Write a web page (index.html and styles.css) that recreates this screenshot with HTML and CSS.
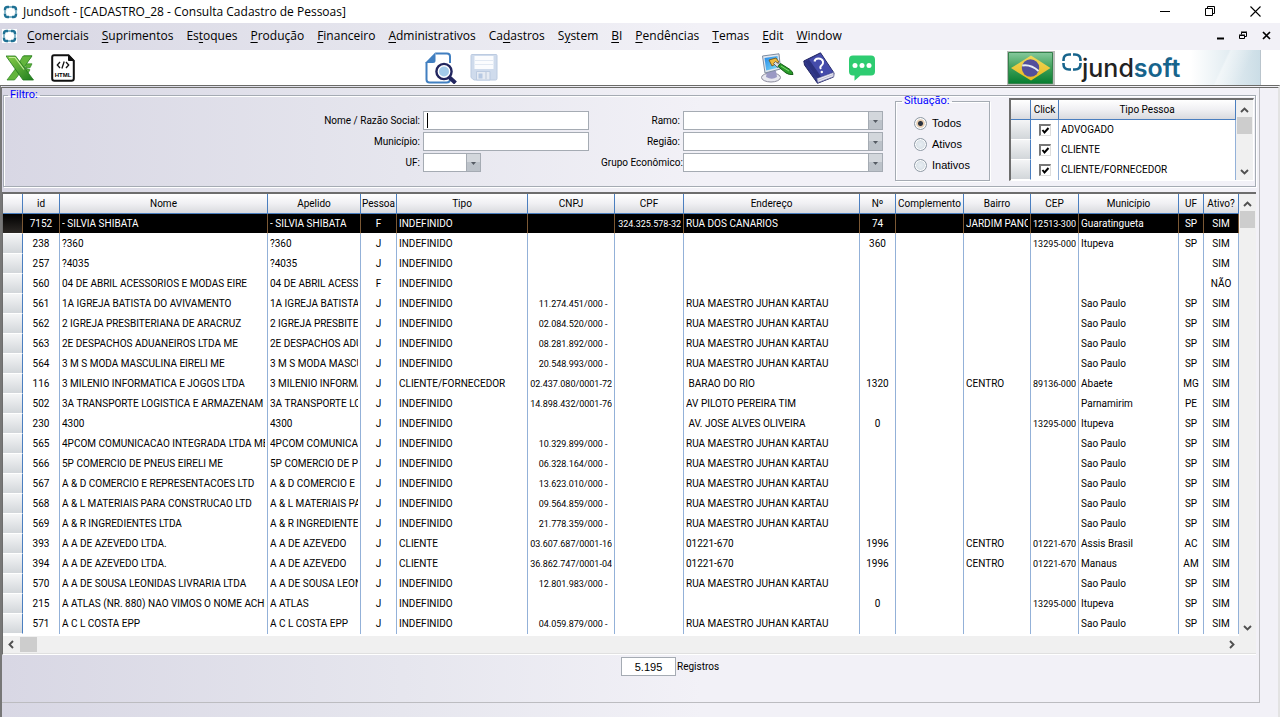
FILE: index.html
```html
<!DOCTYPE html>
<html lang="pt-BR">
<head>
<meta charset="utf-8">
<title>Jundsoft - [CADASTRO_28 - Consulta Cadastro de Pessoas]</title>
<link rel="stylesheet" href="styles.css">
</head>
<body>
<svg width="0" height="0" class="defs" aria-hidden="true">
  <defs>
    <symbol id="mark" viewBox="0 0 15 14">
      <path d="M6 2H4.500Q2 2 2 4.500V5.500M9 2h1.500Q13 2 13 4.500V5.500M6 12H4.500Q2 12 2 9.500V8.500M9 12h1.500Q13 12 13 9.500V8.500" fill="none" stroke="#1f7194" stroke-width="2.400"/>
      <path d="M2 5.500v3M13 5.500v3M6 2h3M6 12h3" stroke="#7fb3c8" stroke-width="1.800"/>
    </symbol>
    <symbol id="up" viewBox="0 0 9 6"><path d="M1 5 4.500 1.500 8 5" fill="none" stroke="#505050" stroke-width="1.900"/></symbol>
    <symbol id="down" viewBox="0 0 9 6"><path d="M1 1 4.500 4.500 8 1" fill="none" stroke="#505050" stroke-width="1.900"/></symbol>
    <symbol id="left" viewBox="0 0 6 9"><path d="M5 1 1.500 4.500 5 8" fill="none" stroke="#505050" stroke-width="1.900"/></symbol>
    <symbol id="right" viewBox="0 0 6 9"><path d="M1 1 4.500 4.500 1 8" fill="none" stroke="#505050" stroke-width="1.900"/></symbol>
  </defs>
</svg>

<header class="titlebar">
  <svg class="mark" width="15" height="14"><use href="#mark"/></svg>
  <h1>Jundsoft - [CADASTRO_28 - Consulta Cadastro de Pessoas]</h1>
  <div class="win-buttons">
    <button aria-label="Minimizar"><svg width="11" height="11"><path d="M0 5.500h10" stroke="#000"/></svg></button>
    <button aria-label="Restaurar"><svg width="11" height="11"><path d="M.5 2.500h7v7h-7zM2.500 2.500v-2h7v7h-2" fill="none" stroke="#000"/></svg></button>
    <button aria-label="Fechar"><svg width="11" height="11"><path d="M.5.5l10 10M10.500.5l-10 10" stroke="#000" stroke-width="1.100"/></svg></button>
  </div>
</header>

<nav class="menubar">
  <svg class="mark" width="15" height="14"><use href="#mark"/></svg>
  <div class="menus">
    <button><u>C</u>omerciais</button>
    <button><u>S</u>uprimentos</button>
    <button>Es<u>t</u>oques</button>
    <button><u>P</u>rodução</button>
    <button><u>F</u>inanceiro</button>
    <button><u>A</u>dministrativos</button>
    <button>Ca<u>d</u>astros</button>
    <button>S<u>y</u>stem</button>
    <button><u>B</u>I</button>
    <button><u>P</u>endências</button>
    <button><u>T</u>emas</button>
    <button><u>E</u>dit</button>
    <button><u>W</u>indow</button>
  </div>
  <div class="mdi-buttons">
    <button aria-label="Minimizar janela"><svg width="9" height="9"><path d="M1 7.500h7" stroke="#000" stroke-width="2"/></svg></button>
    <button aria-label="Restaurar janela"><svg width="9" height="9"><path d="M.5 4.500h5v3h-5zM2.500 3.500v-2h5v4h-2" fill="none" stroke="#000"/><path d="M0 4h6M2 1h6" stroke="#000"/></svg></button>
    <button aria-label="Fechar janela"><svg width="9" height="9"><path d="M1 1l7 7M8 1L1 8" stroke="#000" stroke-width="1.700"/></svg></button>
  </div>
</nav>

<div class="toolbar">
  <div class="tools tools-export">
    <button aria-label="Exportar para Excel">
      <svg width="28" height="26" viewBox="0 0 28 26">
        <defs><linearGradient id="xl" x1="0" y1="0" x2="1" y2="1"><stop offset="0" stop-color="#8bd04a"/><stop offset="1" stop-color="#1e7d1e"/></linearGradient></defs>
        <path d="M18 .8h8l-6 8h6l-2 4h-6l6 2-3 5z" fill="#5cb338" stroke="#2e8423" stroke-width=".7"/>
        <path d="M17 1h9L11 22l-2.500 3H1l9-12z" fill="#63b53d" stroke="#2e8423" stroke-width=".7"/>
        <path d="M0 1h9.500L27.500 25H17z" fill="url(#xl)" stroke="#1f761d" stroke-width=".8"/>
        <path d="M3 2.500h6l9 12" fill="none" stroke="#c5ec98" stroke-width="1.200"/>
      </svg>
    </button>
    <button aria-label="Exportar para HTML">
      <svg width="24" height="28" viewBox="0 0 24 28">
        <path d="M3 1.200h14.500L22.800 7v17.500q0 2.300-2.300 2.300H3.500q-2.300 0-2.300-2.300V3.200q0-2 1.800-2z" fill="#fff" stroke="#111" stroke-width="2"/>
        <path d="M17.500 1v5.500H23z" fill="#111" stroke="#111"/>
        <path d="M9 8 6.300 11 9 14M15 8l2.700 3L15 14M13.200 7.500l-2.300 7" fill="none" stroke="#111" stroke-width="1.300"/>
        <text x="12" y="23" text-anchor="middle" class="html-label">HTML</text>
      </svg>
    </button>
  </div>
  <div class="tools tools-record">
    <button aria-label="Consultar">
      <svg width="32" height="32" viewBox="0 0 32 32">
        <path d="M10.500 1.500H22Q25 1.500 25 4.500V11M1.500 10.500V27.500Q1.500 30.500 4.500 30.500H21.500Q25 30.500 25 27" fill="none" stroke="#417fc0" stroke-width="2"/>
        <path d="M0 11 10.500.3V8.500Q10.500 11 8 11z" fill="#417fc0"/>
        <path d="M23.500 24.500 30.500 31" stroke="#22265f" stroke-width="4"/>
        <circle cx="19" cy="19.500" r="7.600" fill="#fff" stroke="#22265f" stroke-width="2.400"/>
        <circle cx="19" cy="19.500" r="5" fill="#a3cbea"/>
      </svg>
    </button>
    <button aria-label="Salvar" disabled>
      <svg width="28" height="28" viewBox="0 0 28 28">
        <path d="M1 1.500Q1 .5 2 .5H26Q27 .5 27 1.500V24.500Q27 26 25.500 26H4L1 23.500z" fill="#cfdbec" stroke="#bccbe1"/>
        <path d="M4.500 2h19v13h-19z" fill="#fbfcfe"/>
        <path d="M5 6.500h18M5 10.500h18" stroke="#e2e9f3"/>
        <path d="M6.500 17.500H20V26H6.500z" fill="#e6ebf3" stroke="#bccbe1"/>
        <path d="M8.500 19.500h4v5h-4z" fill="#b7c9e3"/>
        <path d="M16 18v8" stroke="#d0d9e6" stroke-width="2"/>
      </svg>
    </button>
  </div>
  <div class="tools tools-help">
    <button aria-label="Temas">
      <svg width="33" height="30" viewBox="0 0 33 30">
        <defs><linearGradient id="scr" x1="0" y1="0" x2="1" y2="1"><stop offset="0" stop-color="#2487e6"/><stop offset="1" stop-color="#7fe0fa"/></linearGradient></defs>
        <ellipse cx="10" cy="24.500" rx="9.500" ry="4.500" fill="#e8e8f0" stroke="#8b8b9c"/>
        <path d="M6 18h9l1 6q-5 3.500-11 0z" fill="#9a99c4"/>
        <path d="M1.500 3 18 .8 19.500 16 4 20z" fill="#dfe6ef" stroke="#7d8ba0"/>
        <path d="M3.500 5 16.500 3 17.500 14.500 5.200 17.500z" fill="url(#scr)"/>
        <path d="M8 7l7-2 3 4-7 4z" fill="#efbb3d" stroke="#6b4a12" stroke-width=".8"/>
        <path d="M14.500 8.500l4 3-2 3-4-4z" fill="#ddd" stroke="#444" stroke-width=".7"/>
        <path d="M17 13.500 19.500 10.500 29 16.500Q32 19 32 21.500 28 22 25 20z" fill="#2a9c2a" stroke="#145c17"/>
        <path d="M20 13l8 5" stroke="#80d872"/>
      </svg>
    </button>
    <button aria-label="Ajuda">
      <svg width="32" height="32" viewBox="0 0 32 32">
        <path d="M.8 9 17.500.8 31 21 30.500 25 14.500 31.300 1.500 13z" fill="#2f3687" stroke="#222663"/>
        <path d="M14 26.500 30.500 20.500 30.800 24.500 15 30.500z" fill="#ececf5" stroke="#8587b5" stroke-width=".7"/>
        <path d="M14.500 28.500 30.500 22.500" stroke="#a7a8c0" stroke-width=".7"/>
        <path d="M2 9.500 17.500 1.500 30 20 14 26z" fill="#454cab"/>
        <path d="M2 9.500 6 7.500 18 24.500 14 26z" fill="#2c327f"/>
        <path d="M11.500 9.500Q12 6.500 15.500 6.500T20 9.500Q20.500 12 18.500 13.500T18 17" fill="none" stroke="#fff" stroke-width="2"/>
        <circle cx="18.800" cy="20" r="1.200" fill="#fff"/>
      </svg>
    </button>
    <button aria-label="Mensagens">
      <svg width="26" height="26" viewBox="0 0 26 26">
        <path d="M4 .5H22Q26 .5 26 4.500V16.500Q26 20.500 22 20.500H11.500L5.500 25.700V20.500H4Q0 20.500 0 16.500V4.500Q0 .5 4 .5z" fill="#2ecc71"/>
        <circle cx="6" cy="10.500" r="2.500" fill="#fff"/><circle cx="13" cy="10.500" r="2.500" fill="#fff"/><circle cx="20" cy="10.500" r="2.500" fill="#fff"/>
      </svg>
    </button>
  </div>
  <div class="brand">
    <svg width="48" height="34" viewBox="0 0 48 34" role="img" aria-label="Brasil">
      <defs>
        <linearGradient id="grn" x1="0" y1="0" x2="0" y2="1"><stop offset="0" stop-color="#86c99c"/><stop offset=".5" stop-color="#3d9f58"/><stop offset="1" stop-color="#067c2f"/></linearGradient>
        <linearGradient id="yel" x1="0" y1="0" x2="0" y2="1"><stop offset="0" stop-color="#eed75c"/><stop offset="1" stop-color="#e8b91d"/></linearGradient>
      </defs>
      <path d="M0 0h48v34H0z" fill="#b9bdb9"/>
      <path d="M1.500 1.500h44v31h-44z" fill="url(#grn)" stroke="#35814b"/>
      <path d="M4 17 24 4.500 43.500 17 24 29.500z" fill="url(#yel)"/>
      <circle cx="23.500" cy="17" r="8.700" fill="#53509b"/>
      <path d="M15.200 14.500Q24 13 31.500 20" fill="none" stroke="#e8eef4" stroke-width="1.800"/>
    </svg>
    <div class="logo">
      <svg width="20" height="18" viewBox="0 0 20 18" aria-hidden="true">
        <path d="M9 1.500H7Q1.500 1.500 1.500 7V8M11 1.500h2Q18.500 1.500 18.500 7V8M9 16.500H7Q1.500 16.500 1.500 11V10M11 16.500h2Q18.500 16.500 18.500 11V10" fill="none" stroke="#17648c" stroke-width="2.600"/>
      </svg>
      <span class="wordmark">jund<b>soft</b></span>
    </div>
  </div>
</div>

<main class="workspace">
  <div class="panel">
    <fieldset class="group filter">
      <legend>Filtro:</legend>
      <div class="fields fields-name">
        <label for="nome">Nome / Razão Social:</label><input id="nome" type="text" class="box caret" autofocus>
        <label for="mun">Município:</label><input id="mun" type="text" class="box">
        <label for="uf">UF:</label><select id="uf" class="box short"><option></option></select>
      </div>
      <div class="fields fields-class">
        <label for="ramo">Ramo:</label><select id="ramo" class="box"><option></option></select>
        <label for="reg">Região:</label><select id="reg" class="box"><option></option></select>
        <label for="grp">Grupo Econômico:</label><select id="grp" class="box"><option></option></select>
      </div>
      <fieldset class="group status">
        <legend>Situação:</legend>
        <label><input type="radio" name="sit" checked>Todos</label>
        <label><input type="radio" name="sit">Ativos</label>
        <label><input type="radio" name="sit">Inativos</label>
      </fieldset>
      <div class="grid-frame types">
        <table class="grid">
          <colgroup><col class="w-ind"><col class="w-click"><col></colgroup>
          <thead><tr><th></th><th>Click</th><th>Tipo Pessoa</th></tr></thead>
          <tbody>
            <tr><td></td><td class="c"><input type="checkbox" aria-label="ADVOGADO" checked></td><td>ADVOGADO</td></tr>
            <tr><td></td><td class="c"><input type="checkbox" aria-label="CLIENTE" checked></td><td>CLIENTE</td></tr>
            <tr><td></td><td class="c"><input type="checkbox" aria-label="CLIENTE/FORNECEDOR" checked></td><td>CLIENTE/FORNECEDOR</td></tr>
          </tbody>
        </table>
        <div class="vbar"><svg width="9" height="6"><use href="#up"/></svg><i class="thumb"></i><svg class="end" width="9" height="6"><use href="#down"/></svg></div>
      </div>
    </fieldset>

    <div class="grid-frame people">
      <table class="grid">
        <colgroup><col class="w-ind"><col class="w-id"><col class="w-nome"><col class="w-apelido"><col class="w-pessoa"><col class="w-tipo"><col class="w-cnpj"><col class="w-cpf"><col><col class="w-num"><col class="w-comp"><col class="w-bairro"><col class="w-cep"><col class="w-mun"><col class="w-uf"><col class="w-ativo"></colgroup>
        <thead><tr><th></th><th>id</th><th>Nome</th><th>Apelido</th><th>Pessoa</th><th>Tipo</th><th>CNPJ</th><th>CPF</th><th>Endereço</th><th>Nº</th><th>Complemento</th><th>Bairro</th><th>CEP</th><th>Município</th><th>UF</th><th>Ativo?</th></tr></thead>
        <tbody>
          <tr class="selected"><td></td><td>7152</td><td>- SILVIA SHIBATA</td><td>- SILVIA SHIBATA</td><td>F</td><td>INDEFINIDO</td><td></td><td>324.325.578-32</td><td>RUA DOS CANARIOS</td><td>74</td><td></td><td>JARDIM PANO</td><td>12513-300</td><td>Guaratingueta</td><td>SP</td><td>SIM</td></tr>
          <tr><td></td><td>238</td><td>?360</td><td>?360</td><td>J</td><td>INDEFINIDO</td><td></td><td></td><td></td><td>360</td><td></td><td></td><td>13295-000</td><td>Itupeva</td><td>SP</td><td>SIM</td></tr>
          <tr><td></td><td>257</td><td>?4035</td><td>?4035</td><td>J</td><td>INDEFINIDO</td><td></td><td></td><td></td><td></td><td></td><td></td><td></td><td></td><td></td><td>SIM</td></tr>
          <tr><td></td><td>560</td><td>04 DE ABRIL ACESSORIOS E MODAS EIRE</td><td>04 DE ABRIL ACESS</td><td>F</td><td>INDEFINIDO</td><td></td><td></td><td></td><td></td><td></td><td></td><td></td><td></td><td></td><td>NÃO</td></tr>
          <tr><td></td><td>561</td><td>1A IGREJA BATISTA DO AVIVAMENTO</td><td>1A IGREJA BATISTA</td><td>J</td><td>INDEFINIDO</td><td>11.274.451/000 -&nbsp;&nbsp;</td><td></td><td>RUA MAESTRO JUHAN KARTAU</td><td></td><td></td><td></td><td></td><td>Sao Paulo</td><td>SP</td><td>SIM</td></tr>
          <tr><td></td><td>562</td><td>2 IGREJA PRESBITERIANA DE ARACRUZ</td><td>2 IGREJA PRESBITE</td><td>J</td><td>INDEFINIDO</td><td>02.084.520/000 -&nbsp;&nbsp;</td><td></td><td>RUA MAESTRO JUHAN KARTAU</td><td></td><td></td><td></td><td></td><td>Sao Paulo</td><td>SP</td><td>SIM</td></tr>
          <tr><td></td><td>563</td><td>2E DESPACHOS ADUANEIROS LTDA ME</td><td>2E DESPACHOS ADU</td><td>J</td><td>INDEFINIDO</td><td>08.281.892/000 -&nbsp;&nbsp;</td><td></td><td>RUA MAESTRO JUHAN KARTAU</td><td></td><td></td><td></td><td></td><td>Sao Paulo</td><td>SP</td><td>SIM</td></tr>
          <tr><td></td><td>564</td><td>3 M S MODA MASCULINA EIRELI ME</td><td>3 M S MODA MASCU</td><td>J</td><td>INDEFINIDO</td><td>20.548.993/000 -&nbsp;&nbsp;</td><td></td><td>RUA MAESTRO JUHAN KARTAU</td><td></td><td></td><td></td><td></td><td>Sao Paulo</td><td>SP</td><td>SIM</td></tr>
          <tr><td></td><td>116</td><td>3 MILENIO INFORMATICA E JOGOS LTDA</td><td>3 MILENIO INFORMA</td><td>J</td><td>CLIENTE/FORNECEDOR</td><td>02.437.080/0001-72</td><td></td><td>&nbsp;BARAO DO RIO</td><td>1320</td><td></td><td>CENTRO</td><td>89136-000</td><td>Abaete</td><td>MG</td><td>SIM</td></tr>
          <tr><td></td><td>502</td><td>3A TRANSPORTE LOGISTICA E ARMAZENAM</td><td>3A TRANSPORTE LO</td><td>J</td><td>INDEFINIDO</td><td>14.898.432/0001-76</td><td></td><td>AV PILOTO PEREIRA TIM</td><td></td><td></td><td></td><td></td><td>Parnamirim</td><td>PE</td><td>SIM</td></tr>
          <tr><td></td><td>230</td><td>4300</td><td>4300</td><td>J</td><td>INDEFINIDO</td><td></td><td></td><td>&nbsp;AV. JOSE ALVES OLIVEIRA</td><td>0</td><td></td><td></td><td>13295-000</td><td>Itupeva</td><td>SP</td><td>SIM</td></tr>
          <tr><td></td><td>565</td><td>4PCOM COMUNICACAO INTEGRADA LTDA ME</td><td>4PCOM COMUNICA</td><td>J</td><td>INDEFINIDO</td><td>10.329.899/000 -&nbsp;&nbsp;</td><td></td><td>RUA MAESTRO JUHAN KARTAU</td><td></td><td></td><td></td><td></td><td>Sao Paulo</td><td>SP</td><td>SIM</td></tr>
          <tr><td></td><td>566</td><td>5P COMERCIO DE PNEUS EIRELI ME</td><td>5P COMERCIO DE P</td><td>J</td><td>INDEFINIDO</td><td>06.328.164/000 -&nbsp;&nbsp;</td><td></td><td>RUA MAESTRO JUHAN KARTAU</td><td></td><td></td><td></td><td></td><td>Sao Paulo</td><td>SP</td><td>SIM</td></tr>
          <tr><td></td><td>567</td><td>A &amp; D COMERCIO E REPRESENTACOES LTD</td><td>A &amp; D COMERCIO E</td><td>J</td><td>INDEFINIDO</td><td>13.623.010/000 -&nbsp;&nbsp;</td><td></td><td>RUA MAESTRO JUHAN KARTAU</td><td></td><td></td><td></td><td></td><td>Sao Paulo</td><td>SP</td><td>SIM</td></tr>
          <tr><td></td><td>568</td><td>A &amp; L MATERIAIS PARA CONSTRUCAO LTD</td><td>A &amp; L MATERIAIS PA</td><td>J</td><td>INDEFINIDO</td><td>09.564.859/000 -&nbsp;&nbsp;</td><td></td><td>RUA MAESTRO JUHAN KARTAU</td><td></td><td></td><td></td><td></td><td>Sao Paulo</td><td>SP</td><td>SIM</td></tr>
          <tr><td></td><td>569</td><td>A &amp; R INGREDIENTES LTDA</td><td>A &amp; R INGREDIENTE</td><td>J</td><td>INDEFINIDO</td><td>21.778.359/000 -&nbsp;&nbsp;</td><td></td><td>RUA MAESTRO JUHAN KARTAU</td><td></td><td></td><td></td><td></td><td>Sao Paulo</td><td>SP</td><td>SIM</td></tr>
          <tr><td></td><td>393</td><td>A A DE AZEVEDO LTDA.</td><td>A A DE AZEVEDO</td><td>J</td><td>CLIENTE</td><td>03.607.687/0001-16</td><td></td><td>01221-670</td><td>1996</td><td></td><td>CENTRO</td><td>01221-670</td><td>Assis Brasil</td><td>AC</td><td>SIM</td></tr>
          <tr><td></td><td>394</td><td>A A DE AZEVEDO LTDA.</td><td>A A DE AZEVEDO</td><td>J</td><td>CLIENTE</td><td>36.862.747/0001-04</td><td></td><td>01221-670</td><td>1996</td><td></td><td>CENTRO</td><td>01221-670</td><td>Manaus</td><td>AM</td><td>SIM</td></tr>
          <tr><td></td><td>570</td><td>A A DE SOUSA LEONIDAS LIVRARIA LTDA</td><td>A A DE SOUSA LEON</td><td>J</td><td>INDEFINIDO</td><td>12.801.983/000 -&nbsp;&nbsp;</td><td></td><td>RUA MAESTRO JUHAN KARTAU</td><td></td><td></td><td></td><td></td><td>Sao Paulo</td><td>SP</td><td>SIM</td></tr>
          <tr><td></td><td>215</td><td>A ATLAS (NR. 880) NAO VIMOS O NOME ACHE</td><td>A ATLAS</td><td>J</td><td>INDEFINIDO</td><td></td><td></td><td></td><td>0</td><td></td><td></td><td>13295-000</td><td>Itupeva</td><td>SP</td><td>SIM</td></tr>
          <tr><td></td><td>571</td><td>A C L COSTA EPP</td><td>A C L COSTA EPP</td><td>J</td><td>INDEFINIDO</td><td>04.059.879/000 -&nbsp;&nbsp;</td><td></td><td>RUA MAESTRO JUHAN KARTAU</td><td></td><td></td><td></td><td></td><td>Sao Paulo</td><td>SP</td><td>SIM</td></tr>
        </tbody>
      </table>
      <div class="vbar"><svg width="9" height="6"><use href="#up"/></svg><i class="thumb"></i><svg class="end" width="9" height="6"><use href="#down"/></svg></div>
      <div class="hbar"><svg width="6" height="9"><use href="#left"/></svg><i class="thumb"></i><svg class="end" width="6" height="9"><use href="#right"/></svg></div>
    </div>

    <div class="total">
      <input id="total" type="text" class="box" value="5.195" readonly>
      <label for="total">Registros</label>
    </div>
  </div>
</main>
</body>
</html>
```
FILE: styles.css
```css
:root {
  --grid-font: Roboto, "Liberation Sans", sans-serif;
  --sans: "Liberation Sans", Arial, sans-serif;
  --menu: "Open Sans", "Noto Sans", sans-serif;
  --chrome: linear-gradient(90deg, #d8d7e4, #e6e6ee 400px, #f2f1f7 700px);
  --line: #a5abb3;
  --blue: #4a7ebf;
  --row-line: #93b1d8;
}

* { box-sizing: border-box; }

body {
  margin: 0;
  min-height: 100vh;
  display: flex;
  flex-direction: column;
  background: #fff;
  color: #000;
  font: 10px/14px var(--grid-font);
}

button {
  padding: 0;
  border: 0;
  background: none;
  color: inherit;
  font: inherit;
}

svg { display: block; }
.defs { position: absolute; }

/* Window chrome */
.titlebar {
  display: flex;
  align-items: center;
  height: 23px;
  padding: 0 2px 0 3px;
}
.titlebar h1 {
  margin: 0 auto 0 5px;
  font: 12px/22px var(--menu);
}
.win-buttons, .mdi-buttons { display: flex; }
.win-buttons button {
  display: grid;
  place-items: center;
  width: 45px;
  height: 20px;
}
.menubar {
  display: flex;
  align-items: center;
  height: 27px;
  padding: 0 2px 2px 0;
  background: var(--chrome);
}
.menubar .mark { margin: 0 10px 0 2px; background: #fff; }
.menus {
  display: flex;
  gap: 13px;
  margin-right: auto;
  font: 12px/24px var(--menu);
}
.menus u { text-underline-offset: 2px; }
.mdi-buttons button {
  display: grid;
  place-items: center;
  width: 23px;
  height: 23px;
}

/* Toolbar */
.toolbar {
  display: grid;
  grid-template-columns: 425fr 335fr 247fr 273px;
  height: 35px;
}
.tools { display: flex; align-items: center; }
.tools-export { padding-left: 6px; gap: 17px; }
.tools-record { gap: 13px; }
.tools-help { padding-left: 1px; gap: 9px; }
.tools-help button:last-child { padding-left: 5px; }
.html-label { font: bold 6px var(--sans); }
.brand {
  display: flex;
  align-items: center;
  gap: 7px;
  margin-right: 19px;
  border-right: 1px solid #b9c4cc;
}
.logo {
  flex: 1;
  display: flex;
  height: 35px;
  padding-top: 3px;
  background:
    linear-gradient(115deg, transparent 78%, #ffffff66 79%, transparent 90%),
    linear-gradient(90deg, #fff 65%, #cbdde6);
}
.wordmark {
  font: 500 25px/30px Inter, sans-serif;
  color: #222;
}
.wordmark b { font-weight: 600; color: #17648c; }

/* Workspace */
.workspace {
  flex: 1;
  display: flex;
  flex-direction: column;
  padding: 0 18px 14px 0;
  border: solid #6b6b68;
  border-width: 3px 2px 0;
  border-top-style: double;
  border-left-color: #777;
  border-right-color: #e3e3e3;
  background: var(--chrome);
}
.panel {
  flex: 1;
  padding: 6px 3px 0 0;
  border: solid #bcbcc0;
  border-width: 0 1px 1px 0;
}
.group {
  min-width: 0;
  margin: 0;
  border: 1px solid var(--line);
  box-shadow: 1px 1px 0 #fff, inset 1px 1px 0 #fff;
}
.group legend {
  padding: 0 2px;
  color: #00f;
  font-size: 11px;
  line-height: 2px;
}

.box {
  height: 19px;
  padding: 0 3px;
  border: 1px solid var(--line);
  border-radius: 0;
  background: #fff;
  font: 11px/14px var(--sans);
  outline: 0;
}
.caret {
  background: linear-gradient(#000, #000) 3px center / 1px 15px no-repeat #fff;
  caret-color: transparent;
}
select.box {
  appearance: none;
  background:
    url("data:image/svg+xml,%3Csvg xmlns='http://www.w3.org/2000/svg' width='14' height='17'%3E%3Cpath d='M0 0h14v8H0z' fill='%23d3d7dc'/%3E%3Cpath d='M0 8h14v9H0z' fill='%23bcc2c9'/%3E%3Cpath d='M.5 0v17' stroke='%23a5abb3'/%3E%3Cpath d='M5 8h5L7.500 11z' fill='%23555b63'/%3E%3C/svg%3E") right center no-repeat #fff;
}

/* Filter */
.filter {
  display: flex;
  align-items: flex-start;
  justify-content: flex-end;
  height: 93px;
  margin-left: 1px;
  padding: 0 1px 0 4px;
}
.fields {
  display: grid;
  grid-auto-rows: 19px;
  align-items: center;
  gap: 2px 3px;
  padding-top: 15px;
}
.fields label { text-align: right; white-space: nowrap; }
.fields-name { grid-template-columns: max-content 166px; margin-right: 12px; }
.fields-class { grid-template-columns: 79px 200px; margin-right: 12px; }
.short { width: 58px; }
.status {
  display: flex;
  flex-direction: column;
  width: 95px;
  height: 81px;
  margin: 4px 19px 0 0;
  padding: 11px 0 0 6px;
}
.status label {
  display: flex;
  align-items: center;
  height: 21px;
  padding-left: 12px;
  font: 11px/21px var(--sans);
}
.status input {
  appearance: none;
  width: 13px;
  height: 13px;
  margin: 0 5px 0 0;
  border: 1px solid #8f9aa5;
  border-radius: 50%;
  background: radial-gradient(#e8eef3, #cfd8df);
  box-shadow: inset 0 0 0 1px #fff;
}
.status input:checked { background: radial-gradient(#2b3340 2px, #e9c9a6 3px, #e4e4e4 5px); }

/* Grids */
.grid-frame {
  display: grid;
  grid-template-columns: 1fr 17px;
  border: solid #6d6d6d;
  border-width: 2px 0 0 1px;
  background: #fff;
}
.types {
  width: 245px;
  height: 83px;
  margin-top: 2px;
  border-width: 2px 1px 1px 2px;
  border-right-color: #fff;
  border-bottom-color: #fff;
  overflow: hidden;
}
.people {
  margin-top: 5px;
  grid-template-rows: 442px 18px;
  border-bottom: 1px solid #fff;
}
.grid {
  width: 100%;
  height: max-content;
  table-layout: fixed;
  border-collapse: separate;
  border-spacing: 0;
}
.grid th, .grid td {
  height: 20px;
  padding: 0 2px;
  overflow: clip;
  overflow-clip-margin: content-box;
  white-space: nowrap;
  text-align: left;
  line-height: 14px;
}
.grid th {
  padding: 0;
  border-right: 1px solid var(--blue);
  border-bottom: 1px solid var(--blue);
  background: linear-gradient(#fff, #f0f0f3 50%, #d9dade);
  font-weight: normal;
  text-align: center;
}
.grid td { border-right: 1px solid var(--row-line); }
.grid td:first-child {
  border-right-color: var(--blue);
  border-bottom: 1px solid #fff;
  background: linear-gradient(#f4f5f6, #d2d6da);
}
.grid .c { text-align: center; }
.grid .selected td {
  border-right-color: #7b5834;
  border-bottom: 1px solid #fff;
  background: #000;
  color: #fff;
}
.grid .selected td:first-child { background: linear-gradient(#000, #2c2825); }

.people td:nth-child(2), .people td:nth-child(5), .people td:nth-child(10),
.people td:nth-child(15), .people td:nth-child(16) { text-align: center; }
.people td:nth-child(7), .people td:nth-child(8), .people td:nth-child(13) {
  text-align: right;
  font-size: 9px;
}

.w-ind { width: 20px; }
.w-click { width: 28px; }
.w-id { width: 37px; }
.w-nome { width: 208px; }
.w-apelido { width: 93px; }
.w-pessoa { width: 36px; }
.w-tipo { width: 131px; }
.w-cnpj { width: 87px; }
.w-cpf { width: 69px; }
.w-num { width: 36px; }
.w-comp { width: 68px; }
.w-bairro { width: 67px; }
.w-cep { width: 48px; }
.w-mun { width: 100px; }
.w-uf { width: 25px; }
.w-ativo { width: 35px; }

.grid input {
  appearance: none;
  display: block;
  width: 12px;
  height: 12px;
  margin: 0 auto;
  border: solid;
  border-width: 2px 1px 1px 2px;
  border-color: #777 #ddd #ddd #777;
}
.grid input:checked {
  background: url("data:image/svg+xml,%3Csvg xmlns='http://www.w3.org/2000/svg' width='9' height='9'%3E%3Cpath d='M1.500 4l2 2.500L7.500 2' fill='none' stroke='%23000' stroke-width='2'/%3E%3C/svg%3E") center no-repeat #fff;
}

.vbar, .hbar {
  display: flex;
  align-items: center;
  background: #f0f0f0;
}
.vbar { flex-direction: column; padding: 7px 0 5px; }
.vbar .thumb { width: 15px; height: 17px; margin-top: 4px; background: #cdcdcd; }
.vbar .end { margin-top: auto; }
.hbar {
  grid-column: 1 / -1;
  padding: 0 21px 0 5px;
  border-bottom: 1px solid #e0e0e0;
}
.hbar .thumb { width: 17px; height: 15px; margin-left: 6px; background: #cdcdcd; }
.hbar .end { margin-left: auto; }

.total {
  display: flex;
  align-items: center;
  gap: 1px;
  padding: 2px 0 0 calc(50% - 8px);
}
.total .box { width: 55px; text-align: center; }
```
